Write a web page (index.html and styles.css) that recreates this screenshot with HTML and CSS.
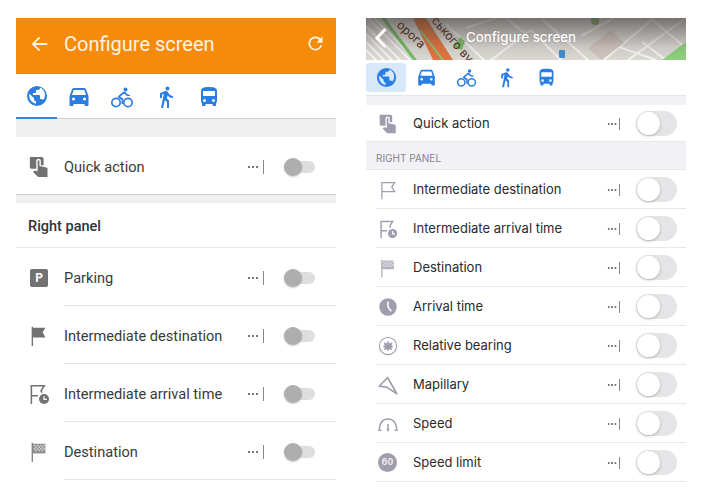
FILE: index.html
```html
<!DOCTYPE html>
<html lang="en">
<head>
  <meta charset="UTF-8">
  <title>Configure screen</title>
  <link rel="stylesheet" href="styles.css">
</head>
<body>
<svg class="defs" width="0" height="0">
  <defs>
    <symbol id="i-globe" viewBox="0 0 24 24"><path fill-rule="evenodd" d="M12 2a10 10 0 1 0 0 20 10 10 0 0 0 0-20zM4.200 12c0-.8.100-1.500.300-2.200L9 14.300v1c0 1.100.900 2 2 2v2.400A7.900 7.900 0 0 1 4.200 12zm13.700 4.300c-.300-.8-1-1.300-1.900-1.300h-1v-3c0-.6-.400-1-1-1H8v-2h2c.600 0 1-.400 1-1V6h2c1.100 0 2-.900 2-2v-.400a7.900 7.900 0 0 1 2.900 12.700z"/></symbol>
    <symbol id="i-car" viewBox="0 0 24 24"><path d="M19 4.500C18.700 3.600 17.900 3 17 3H7c-.900 0-1.700.600-2 1.500L2.500 11v9c0 .600.400 1 1 1h2c.600 0 1-.400 1-1v-1h11v1c0 .600.400 1 1 1h2c.600 0 1-.400 1-1v-9L19 4.500zM6.500 15.500a1.500 1.500 0 1 1 0-3 1.500 1.500 0 0 1 0 3zm11 0a1.500 1.500 0 1 1 0-3 1.500 1.500 0 0 1 0 3zM5 10l1.600-4.800c.100-.100.200-.200.400-.200h10c.200 0 .300.100.400.200L19 10H5z"/></symbol>
    <symbol id="i-bike" viewBox="0 0 24 24"><circle cx="15.500" cy="4.500" r="2"/><path d="M10.200 11.500 14 8.500l2.400 2.100c.400.400.800.500 1.400.5H20V9.700h-2l-2.700-2.600c-.700-.700-1.800-.700-2.500 0L8.500 10.700c-.600.600-.600 1.600.100 2.200l3 2v4.100h1.700v-5.300z"/><circle cx="6" cy="17.500" r="4.200" fill="none" stroke="currentColor" stroke-width="1.700"/><circle cx="18" cy="17.500" r="4.200" fill="none" stroke="currentColor" stroke-width="1.700"/></symbol>
    <symbol id="i-walk" viewBox="0 0 24 24"><path d="M13.500 5.500a2 2 0 1 0 0-4 2 2 0 0 0 0 4zM9.800 8.900 7 23h2.100l1.800-8 2.100 2v6h2v-7.500l-2.100-2 .600-3A7.300 7.300 0 0 0 19 13v-2c-1.900 0-3.500-1-4.300-2.400l-1-1.600c-.400-.600-1-1-1.700-1-.300 0-.500.100-.800.100L6 8.300V13h2V9.600l1.800-.700z"/></symbol>
    <symbol id="i-bus" viewBox="0 0 24 24"><path d="M12 2C7.600 2 4 2.500 4 6v10c0 .900.400 1.700 1 2.200V20c0 .600.400 1 1 1h1.500c.600 0 1-.400 1-1v-1h7v1c0 .600.400 1 1 1H18c.600 0 1-.400 1-1v-1.800c.600-.500 1-1.300 1-2.200V6c0-3.500-3.600-4-8-4zM7.500 17a1.500 1.500 0 1 1 0-3 1.500 1.500 0 0 1 0 3zm9 0a1.500 1.500 0 1 1 0-3 1.500 1.500 0 0 1 0 3zM18 11H6V6h12v5z"/></symbol>
    <symbol id="i-touch" viewBox="0 0 24 24"><path d="M2 1h13c1 0 2 1 2 2v7h-3V5.500C14 4 13 3 11.500 3S9 4 9 5.500V14H4c-1 0-2-1-2-2V1z"/><path d="M10.500 5.500c0-.600.400-1 1-1s1 .400 1 1V11l7.500 1.600c.800.200 1.300.800 1.300 1.600V23H11l-5.500-5.500 1.200-1.200c.300-.300.700-.400 1.100-.300l2.700.700V5.500z"/></symbol>
    <symbol id="i-flag" viewBox="0 0 24 24"><path d="M4 2h1.500v21H4zM5.500 3H19l-3 5 3 5.500H5.500z"/></symbol>
    <symbol id="i-flag-line" viewBox="0 0 24 24"><path fill="none" stroke="currentColor" stroke-width="1.500" d="M4.700 23V3H20l-3.500 5.500L20 14H4.700"/></symbol>
    <symbol id="i-flag-time" viewBox="0 0 24 24"><path fill="none" stroke="currentColor" stroke-width="1.700" d="M3.700 23V3h14l-3.500 5.500 1 2M3.700 14H11"/><circle cx="17.500" cy="17.500" r="5.500"/><path fill="none" stroke="#fff" stroke-width="1.300" d="M17.500 14.500v3.300h3"/></symbol>
    <symbol id="i-flag-check" viewBox="0 0 24 24"><path d="M4 2h1.300v21H4z"/><path d="M5.300 3H19v10.500H5.300z" fill-opacity=".8"/><path d="M6 4h1.800v1.800H6zm3.600 0h1.800v1.800H9.600zm3.600 0H15v1.800h-1.800zm3.600 0h1.800v1.800h-1.800zM7.800 5.800h1.800v1.800H7.800zm3.600 0h1.800v1.800h-1.800zm3.600 0h1.800v1.800H15zM6 7.600h1.800v1.800H6zm3.600 0h1.800v1.800H9.600zm3.600 0H15v1.800h-1.800zm3.600 0h1.800v1.800h-1.800zM7.800 9.400h1.800v1.800H7.800zm3.600 0h1.800v1.800h-1.800zm3.600 0h1.800v1.800H15z" fill="#fff" fill-opacity=".6"/></symbol>
    <symbol id="i-clock" viewBox="0 0 24 24"><circle cx="12" cy="12" r="10.500"/><path fill="none" stroke="#fff" stroke-width="1.800" d="M12 5.500V12l4 5"/></symbol>
    <symbol id="i-bearing" viewBox="0 0 24 24"><circle cx="12" cy="12" r="10.300" fill="none" stroke="currentColor" stroke-width="1.300"/><path d="m12 5.500 1.500 3.500L17.500 7.500l-1.200 3.800L18.500 13l-2.400 1.100.8 3-3.400-1.200L12 18.500l-1.300-2.600-3.400 1.200.8-3.200L5.500 12.500l2.400-1.200L6.800 7.500l3.700 1.500z"/></symbol>
    <symbol id="i-mapillary" viewBox="0 0 24 24"><path fill="none" stroke="currentColor" stroke-width="2" stroke-linejoin="round" d="M1.500 13.500 11.500 3 22.500 22.500 10.500 14.500z"/></symbol>
    <symbol id="i-speed" viewBox="0 0 24 24"><path fill="none" stroke="currentColor" stroke-width="1.700" d="M1.500 20C1.500 10 6 6 12 6s10.500 4 10.500 14"/><path d="M.5 18.500h3.500v2H.5zm19.500 0h3.500v2H20z"/><path d="m12 21.500-1.800-3.500.9-.2V12h1.800v5.800l.9.200z"/></symbol>
  </defs>
</svg>

<div class="shots">

  <section class="android">
    <header class="a-bar">
      <svg class="a-back" viewBox="0 0 24 24"><path d="M21 11H7.800l5.600-5.600L12 4l-8 8 8 8 1.400-1.400L7.800 13H21z"/></svg>
      <h1>Configure screen</h1>
      <svg class="a-refresh" viewBox="0 0 24 24"><path d="M17.700 6.300A8 8 0 1 0 19.700 14h-2.100a6 6 0 1 1-1.400-6.200L13 11h7V4z"/></svg>
    </header>
    <nav class="a-tabs">
      <span class="a-tab a-tab-on"><svg class="ic-tab"><use href="#i-globe"/></svg></span>
      <span class="a-tab"><svg class="ic-tab"><use href="#i-car"/></svg></span>
      <span class="a-tab"><svg class="ic-tab"><use href="#i-bike"/></svg></span>
      <span class="a-tab"><svg class="ic-tab"><use href="#i-walk"/></svg></span>
      <span class="a-tab"><svg class="ic-tab"><use href="#i-bus"/></svg></span>
    </nav>
    <div class="a-gap a-gap-big"></div>
    <div class="a-row a-row-solo">
      <svg class="a-ic"><use href="#i-touch"/></svg>
      <span class="a-label">Quick action</span>
      <span class="a-dots"></span><span class="a-bar-mark"></span>
      <span class="a-switch"></span>
    </div>
    <div class="a-gap"></div>
    <div class="a-section">Right panel</div>
    <div class="a-row">
      <span class="a-park">P</span>
      <span class="a-label">Parking</span>
      <span class="a-dots"></span><span class="a-bar-mark"></span>
      <span class="a-switch"></span>
    </div>
    <div class="a-row">
      <svg class="a-ic"><use href="#i-flag"/></svg>
      <span class="a-label">Intermediate destination</span>
      <span class="a-dots"></span><span class="a-bar-mark"></span>
      <span class="a-switch"></span>
    </div>
    <div class="a-row">
      <svg class="a-ic"><use href="#i-flag-time"/></svg>
      <span class="a-label">Intermediate arrival time</span>
      <span class="a-dots"></span><span class="a-bar-mark"></span>
      <span class="a-switch"></span>
    </div>
    <div class="a-row">
      <svg class="a-ic"><use href="#i-flag-check"/></svg>
      <span class="a-label">Destination</span>
      <span class="a-dots"></span><span class="a-bar-mark"></span>
      <span class="a-switch"></span>
    </div>
  </section>

  <section class="ios">
    <header class="i-bar">
      <svg class="i-map" viewBox="0 0 320 42" preserveAspectRatio="none">
        <rect width="320" height="42" fill="#dcd9d5"/>
        <g stroke="#f6f5f3" stroke-width="2" fill="none">
          <path d="M0 8 34 42M0 16 26 42M0 24 18 42M0 32 10 42M2 0 44 42M8 0 50 42"/>
          <path d="M80 6 118 42M100 10 130 0M125 42 165 12 195 42M175 0 222 42M238 42 288 0M262 42 320 0M215 18 248 0M250 28 290 42M284 0 320 30M140 0 160 16M300 42 276 24"/>
        </g>
        <path d="M15 0 47 42h4L19 0z" fill="#78bd64"/>
        <path d="M47 0H60L87 42H67z" fill="#e4733f"/>
        <path d="M54 12 77 42" stroke="#8cc47a" stroke-width="2"/>
        <path d="M87 30 94 19 99 23 96 32z" fill="#7fc06a"/>
        <circle cx="229" cy="3" r="4" fill="#7fb36a"/>
        <path d="M296 42 320 24V42z" fill="#8ed07c"/>
        <path d="M222 30 245 12 258 25 235 42z" fill="#d2c6c1"/>
        <rect x="193" y="32" width="6" height="8" rx="1" fill="#3f8fd0"/>
        <rect width="320" height="42" fill="url(#i-shade)"/>
        <defs>
          <linearGradient id="i-shade" x1="0" x2="0" y1="0" y2="1">
            <stop offset="0" stop-color="#3c3734" stop-opacity=".65"/>
            <stop offset=".7" stop-color="#3c3734" stop-opacity=".1"/>
            <stop offset="1" stop-color="#3c3734" stop-opacity="0"/>
          </linearGradient>
        </defs>
        <text class="i-map-word" transform="translate(30 8) rotate(43)">орога</text>
        <text class="i-map-word" transform="translate(65 3) rotate(49)">ського вул</text>
      </svg>
      <svg class="i-back" viewBox="0 0 14 24"><path d="M11.500 3 3 12l8.500 9" fill="none" stroke="#fff" stroke-width="3"/></svg>
      <h2>Configure screen</h2>
    </header>
    <nav class="i-tabs">
      <span class="i-tab i-tab-on"><svg class="ic-itab"><use href="#i-globe"/></svg></span>
      <span class="i-tab"><svg class="ic-itab"><use href="#i-car"/></svg></span>
      <span class="i-tab"><svg class="ic-itab"><use href="#i-bike"/></svg></span>
      <span class="i-tab"><svg class="ic-itab"><use href="#i-walk"/></svg></span>
      <span class="i-tab"><svg class="ic-itab"><use href="#i-bus"/></svg></span>
    </nav>
    <div class="i-gap"></div>
    <div class="i-row i-row-solo">
      <svg class="i-ic"><use href="#i-touch"/></svg>
      <span class="i-label">Quick action</span>
      <span class="i-dots"></span><span class="i-mark"></span>
      <span class="i-switch"></span>
    </div>
    <div class="i-section">RIGHT PANEL</div>
    <div class="i-row">
      <svg class="i-ic"><use href="#i-flag-line"/></svg>
      <span class="i-label">Intermediate destination</span>
      <span class="i-dots"></span><span class="i-mark"></span>
      <span class="i-switch"></span>
    </div>
    <div class="i-row">
      <svg class="i-ic"><use href="#i-flag-time"/></svg>
      <span class="i-label">Intermediate arrival time</span>
      <span class="i-dots"></span><span class="i-mark"></span>
      <span class="i-switch"></span>
    </div>
    <div class="i-row">
      <svg class="i-ic"><use href="#i-flag-check"/></svg>
      <span class="i-label">Destination</span>
      <span class="i-dots"></span><span class="i-mark"></span>
      <span class="i-switch"></span>
    </div>
    <div class="i-row">
      <svg class="i-ic"><use href="#i-clock"/></svg>
      <span class="i-label">Arrival time</span>
      <span class="i-dots"></span><span class="i-mark"></span>
      <span class="i-switch"></span>
    </div>
    <div class="i-row">
      <svg class="i-ic"><use href="#i-bearing"/></svg>
      <span class="i-label">Relative bearing</span>
      <span class="i-dots"></span><span class="i-mark"></span>
      <span class="i-switch"></span>
    </div>
    <div class="i-row">
      <svg class="i-ic"><use href="#i-mapillary"/></svg>
      <span class="i-label">Mapillary</span>
      <span class="i-dots"></span><span class="i-mark"></span>
      <span class="i-switch"></span>
    </div>
    <div class="i-row">
      <svg class="i-ic"><use href="#i-speed"/></svg>
      <span class="i-label">Speed</span>
      <span class="i-dots"></span><span class="i-mark"></span>
      <span class="i-switch"></span>
    </div>
    <div class="i-row">
      <span class="i-limit">60</span>
      <span class="i-label">Speed limit</span>
      <span class="i-dots"></span><span class="i-mark"></span>
      <span class="i-switch"></span>
    </div>
  </section>

</div>
</body>
</html>
```

FILE: styles.css
```css
html, body {
  margin: 0;
  height: 500px;
  overflow: hidden;
  background-color: #fff;
}
.defs {
  display: block;
  height: 0;
}
.shots {
  display: flex;
  gap: 30px;
  padding: 18px 17px 0 16px;
}
.android, .ios {
  width: 320px;
  flex: none;
}

/* left phone */
.android {
  font-family: Roboto, sans-serif;
}
.a-bar {
  height: 56px;
  box-sizing: border-box;
  background-color: #f68b09;
  border-bottom: 1px solid #c98a35;
  display: flex;
  align-items: center;
  color: #fdf4e6;
  padding: 0 10px 1px 12px;
}
.a-back {
  width: 22px;
  height: 22px;
  fill: #fdf4e6;
  margin-top: -3px;
}
.a-refresh {
  width: 21px;
  height: 21px;
  fill: #fdf4e6;
  margin-top: -4px;
}
.a-bar h1 {
  flex: 1;
  margin: -3px 0 0 14px;
  font-size: 20px;
  font-weight: 400;
}
.a-tabs {
  height: 44px;
  display: flex;
  border-bottom: 1px solid #cfcfcf;
}
.a-tab {
  width: 43.5px;
  display: flex;
  align-items: center;
  justify-content: center;
  box-sizing: border-box;
  padding-top: 1px;
  color: #2a7de1;
}
.a-tab-on {
  width: 41px;
  border-bottom: 2px solid #3b85dd;
  margin-bottom: -1px;
}
.ic-tab {
  width: 24px;
  height: 24px;
  fill: currentColor;
}
.a-gap {
  height: 8px;
  background-color: #f0f0f0;
}
.a-gap-big {
  height: 18px;
}
.a-section {
  height: 44px;
  line-height: 47px;
  padding-left: 12px;
  font-size: 14.5px;
  font-weight: 500;
  color: #333;
  border-bottom: 1px solid #ebebeb;
}
.a-row {
  height: 58px;
  box-sizing: border-box;
  padding-top: 1px;
  display: flex;
  align-items: center;
  position: relative;
}
.a-row::after {
  content: "";
  position: absolute;
  left: 48px;
  right: 0;
  bottom: 0;
  height: 1px;
  background-color: #e6e6e6;
}
.a-row-solo::after {
  left: 0;
  background-color: #cfcfcf;
}
.a-ic {
  width: 22px;
  height: 22px;
  margin-left: 12px;
  fill: #727272;
  color: #727272;
  flex: none;
}
.a-park {
  width: 18px;
  height: 18px;
  margin: 0 2px 0 14px;
  border-radius: 2px;
  background-color: #727272;
  color: #fff;
  font-size: 12px;
  font-weight: 700;
  text-align: center;
  line-height: 18px;
  flex: none;
}
.a-label {
  flex: 1;
  margin-left: 14px;
  font-size: 14.6px;
  color: #3a3a3a;
}
.a-dots {
  width: 12px;
  height: 2px;
  background-image: radial-gradient(circle, #777 0.8px, transparent 1.1px);
  background-size: 4px 2px;
}
.a-bar-mark {
  width: 1px;
  height: 14px;
  margin: 0 20px 0 4px;
  background-color: #888;
}
.a-switch {
  width: 31px;
  height: 12px;
  margin-right: 21px;
  border-radius: 6px;
  background-color: #dedede;
  position: relative;
}
.a-switch::before {
  content: "";
  position: absolute;
  left: 0;
  top: -3px;
  width: 18px;
  height: 18px;
  border-radius: 50%;
  background-color: #aeaeae;
  box-shadow: 0 1px 2px rgba(0, 0, 0, 0.2);
}

/* right phone */
.ios {
  font-family: Inter, sans-serif;
}
.i-bar {
  height: 42px;
  position: relative;
  display: flex;
  align-items: center;
  justify-content: center;
  overflow: hidden;
}
.i-map {
  position: absolute;
  inset: 0;
  width: 100%;
  height: 100%;
}
.i-map-word {
  font-family: Inter, sans-serif;
  font-size: 12px;
  fill: #4a2a20;
}
.i-back {
  position: absolute;
  left: 8px;
  top: 8px;
  width: 14px;
  height: 24px;
}
.i-bar h2 {
  position: relative;
  margin: -5px 10px 0 0;
  font-size: 13.3px;
  font-weight: 500;
  color: #fff;
  text-shadow: 0 0 2px rgba(0, 0, 0, 0.2);
}
.i-tabs {
  height: 35px;
  display: flex;
  box-sizing: border-box;
}
.i-tab {
  width: 40px;
  height: 29px;
  margin-top: 3px;
  display: flex;
  align-items: center;
  justify-content: center;
  color: #2a7de1;
  border-radius: 3px;
}
.i-tab-on {
  background-color: #d7e8fb;
}
.ic-itab {
  width: 21px;
  height: 21px;
  fill: currentColor;
}
.i-tab-on .ic-itab {
  width: 23px;
  height: 23px;
}
.i-gap {
  height: 10px;
  background-color: #f1f1f6;
  border-top: 1px solid #e4e4ea;
  box-sizing: border-box;
}
.i-section {
  height: 28px;
  line-height: 33px;
  box-sizing: border-box;
  padding-left: 10px;
  background-color: #f1f1f6;
  font-size: 10px;
  color: #85838c;
  border-bottom: 1px solid #e6e6ec;
}
.i-row {
  height: 39px;
  display: flex;
  align-items: center;
  position: relative;
}
.i-row::after {
  content: "";
  position: absolute;
  left: 10px;
  right: 0;
  bottom: 0;
  height: 1px;
  background-color: #e8e8ec;
}
.i-row-solo {
  height: 37px;
}
.i-row-solo::after {
  left: 0;
}
.i-ic {
  width: 20px;
  height: 20px;
  margin-left: 12px;
  fill: #a09dad;
  color: #a09dad;
  flex: none;
}
.i-limit {
  width: 19px;
  height: 19px;
  margin-left: 12px;
  flex: none;
  border-radius: 50%;
  background-color: #a09dad;
  color: #eee;
  font-size: 8.5px;
  font-weight: 700;
  text-align: center;
  line-height: 19px;
}
.i-limit + .i-label {
  margin-left: 16px;
}
.i-label {
  flex: 1;
  margin-left: 15px;
  padding-bottom: 2px;
  font-size: 13px;
  color: #2a2a2c;
}
.i-dots {
  width: 10px;
  height: 2px;
  background-image: radial-gradient(circle, #777 0.7px, transparent 1px);
  background-size: 3.4px 2px;
}
.i-mark {
  width: 1px;
  height: 12px;
  margin: 0 16px 0 2px;
  background-color: #888;
}
.i-switch {
  width: 41px;
  height: 25px;
  margin-right: 9px;
  border-radius: 13px;
  background-color: #e5e5e8;
  position: relative;
}
.i-switch::before {
  content: "";
  position: absolute;
  left: 1px;
  top: 1px;
  width: 23px;
  height: 23px;
  border-radius: 50%;
  background-color: #fff;
  box-shadow: 0 1px 3px rgba(0, 0, 0, 0.25);
}
```
